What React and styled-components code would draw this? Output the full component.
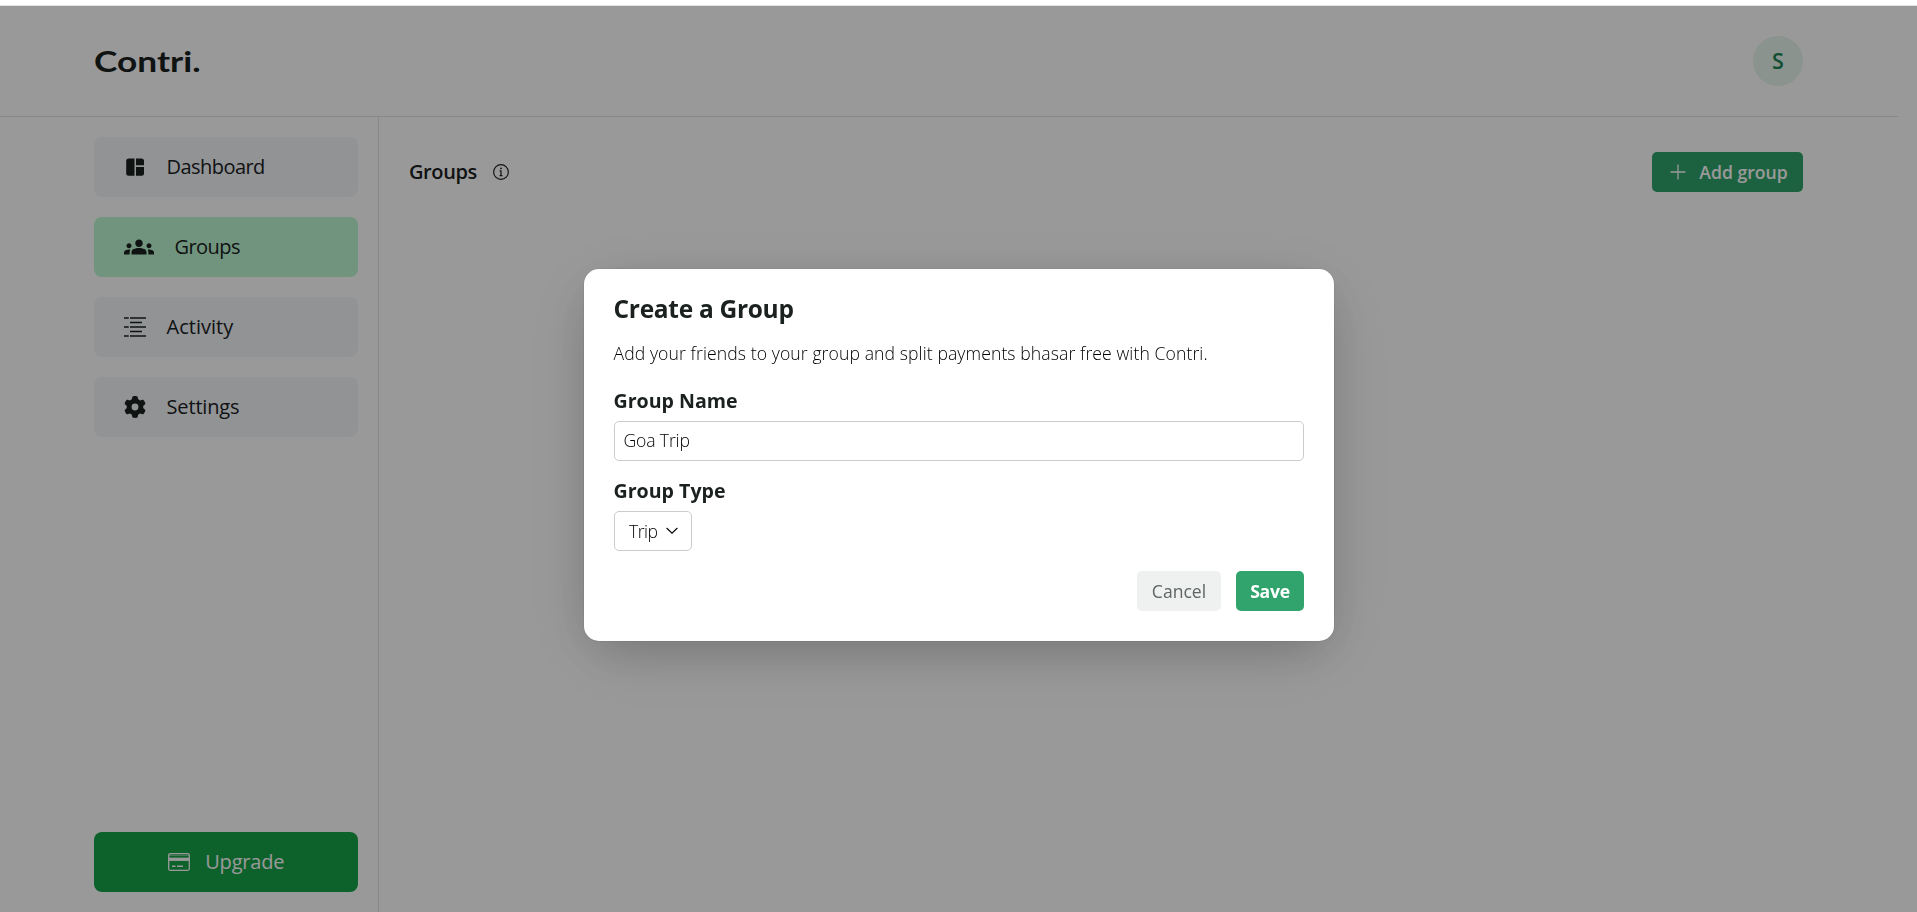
import React from "react";
import styled, { createGlobalStyle } from "styled-components";
import { FaGear } from "react-icons/fa6";
import { MdGroups } from "react-icons/md";

const GlobalStyle = createGlobalStyle`
  * { box-sizing: border-box; }
  body {
    margin: 0;
    background: #fff;
    color: #1a211e;
    font-family: "Open Sans", "Noto Sans", sans-serif;
    font-size: 17.6px;
    overflow: hidden;
  }
  button, input { font: inherit; color: inherit; margin: 0; }
  h1, h2, h3, p { margin: 0; }
  svg { display: block; flex: none; }
`;

const Page = styled.div`
  height: 912px;
  display: flex;
  flex-direction: column;
  border-top: 5px solid #fff;
`;
const Shell = styled.div`
  width: 1898px;
  flex: 1;
  display: flex;
  flex-direction: column;
`;
const Header = styled.header`
  height: 112px;
  padding: 0 95px 0 94px;
  display: flex;
  align-items: center;
  justify-content: space-between;
  border-bottom: 1px solid #e2e3e3;
`;
const Logo = styled.h1`
  font-family: Lato, sans-serif;
  font-size: 28px;
  font-weight: 700;
  line-height: 36px;
  transform: scaleX(1.26);
  transform-origin: left;
`;
const Avatar = styled.div`
  width: 50px;
  height: 50px;
  border-radius: 50%;
  background: #e6f6eb;
  color: #218358;
  display: flex;
  align-items: center;
  justify-content: center;
  font-size: 21.5px;
  font-weight: 600;
`;
const Body = styled.div`
  flex: 1;
  display: flex;
`;
const Sidebar = styled.aside`
  width: 379px;
  padding: 20px 20px 20px 94px;
  border-right: 1px solid #e2e3e3;
  display: flex;
  flex-direction: column;
  justify-content: space-between;
`;
const Nav = styled.nav`
  display: flex;
  flex-direction: column;
  gap: 20px;
`;
const NavItem = styled.a`
  height: 60px;
  padding: 0 30px;
  border-radius: 8px;
  display: flex;
  align-items: center;
  gap: 20px;
  background: ${(p) => (p.$active ? "#bbf7d0" : "#f2f5f8")};
  font-size: 20px;
  font-weight: 400;
`;
const NavLabel = styled.span`
  line-height: 28px;
  padding: 0 0 1px 0.5px;
  letter-spacing: ${(p) => p.$track || 0}px;
`;
const UpgradeButton = styled.button`
  height: 60px;
  border: 0;
  border-radius: 8px;
  background: #16a34a;
  color: #fff;
  display: flex;
  align-items: center;
  justify-content: center;
  gap: 15px;
  font-size: 20px;
  font-weight: 400;
`;
const Main = styled.main`
  flex: 1;
  padding: 35px 95px 0 30px;
`;
const Bar = styled.div`
  height: 40px;
  display: flex;
  align-items: center;
  justify-content: space-between;
`;
const Heading = styled.div`
  display: flex;
  align-items: center;
  gap: 15px;
`;
const HeadingText = styled.h2`
  font-size: 20px;
  font-weight: 600;
  line-height: 28px;
  letter-spacing: -0.4px;
`;
const Button = styled.button`
  height: 40px;
  width: ${(p) => p.$width}px;
  padding: 0 0 1px 1px;
  border: 0;
  border-radius: 5px;
  display: flex;
  align-items: center;
  justify-content: center;
  gap: 11px;
  font-size: 17.6px;
  line-height: 24px;
  font-weight: ${(p) => p.$weight || 600};
  letter-spacing: ${(p) => p.$track || 0}px;
  background: ${(p) => (p.$soft ? "#eef1f0" : "#30a46c")};
  color: ${(p) => (p.$soft ? "#5f6563" : "#fff")};
`;
const Overlay = styled.div`
  position: fixed;
  inset: 5px 0 0 0;
  background: rgba(0, 0, 0, 0.4);
  border-top: 1px solid #dfe5e1;
  display: flex;
  align-items: flex-start;
  justify-content: center;
  padding-top: 263px;
`;
const Dialog = styled.section`
  width: 750px;
  height: 372px;
  padding: 23px 30px 30px;
  border-radius: 15px;
  background: #fff;
  box-shadow: 0 0 0 1px rgba(0, 30, 20, 0.06), 0 15px 75px rgba(0, 0, 0, 0.1),
    0 15px 50px -12px rgba(0, 20, 12, 0.2);
  display: flex;
  flex-direction: column;
`;
const Title = styled.h2`
  font-size: 24.5px;
  font-weight: 700;
  line-height: 34px;
  letter-spacing: -0.3px;
`;
const Description = styled.p`
  margin-top: 14px;
  font-size: 17.6px;
  font-weight: 300;
  line-height: 26px;
  letter-spacing: 0.09px;
  color: #000;
`;
const Field = styled.div`
  display: flex;
  flex-direction: column;
  align-items: flex-start;
  margin-top: ${(p) => p.$top}px;
`;
const Label = styled.label`
  height: 30px;
  padding-top: 1px;
  font-size: 19.6px;
  font-weight: 700;
  line-height: 28px;
  margin-bottom: 5px;
`;
const Input = styled.input`
  width: 100%;
  height: 40px;
  padding: 0 9px 3px;
  border: 1px solid #c9cccb;
  border-radius: 5px;
  outline: 0;
  color: #000;
  font-weight: 300;
  letter-spacing: -0.15px;
`;
const Select = styled.button`
  width: 78px;
  height: 40px;
  padding: 0 13px 1px 14.5px;
  border: 1px solid #c9cccb;
  border-radius: 5px;
  background: #fff;
  display: flex;
  align-items: center;
  justify-content: space-between;
  color: #000;
  font-weight: 300;
  letter-spacing: -0.5px;
`;
const Actions = styled.div`
  display: flex;
  justify-content: flex-end;
  gap: 15px;
  margin-top: 20px;
`;

const DashboardIcon = () => (
  <svg width="22" height="22" viewBox="0 0 22 22" fill="currentColor">
    <path d="M10.5 2.500v17.300H4.700A2.500 2.500 0 0 1 2.200 17.300V5A2.500 2.500 0 0 1 4.700 2.500z" />
    <path d="M12 2.500h5.500A2.500 2.500 0 0 1 20 5V9.300H12z" />
    <path d="M12 11H20V17.300A2.500 2.500 0 0 1 17.500 19.800H12z" />
  </svg>
);

const ActivityIcon = () => (
  <svg width="22" height="22" viewBox="0 0 22 22" fill="none" stroke="currentColor" strokeWidth="1.400">
    <path d="M0 2h4.700M6 2h16M6 6.500h12M0 11h4.700M6 11h16M6 15.500h12M0 20h4.700M6 20h16" />
  </svg>
);

const CardIcon = () => (
  <svg width="22" height="22" viewBox="0 0 22 22" fill="none" stroke="currentColor" strokeWidth="1.300">
    <rect x="0.700" y="2.700" width="20.600" height="16.600" rx="1.500" />
    <path d="M1 4.300h20" strokeWidth="1" opacity=".5" />
    <path d="M1 8.300h20" strokeWidth="3.300" />
    <path d="M4 15.300h3.500M9 15.300h6" strokeWidth="1.500" />
  </svg>
);

const InfoIcon = () => (
  <svg width="18" height="18" viewBox="0 0 15 15" fill="none">
    <circle cx="7.500" cy="7.500" r="6.150" stroke="currentColor" strokeWidth=".950" />
    <circle cx="7.500" cy="4.500" r=".75" fill="currentColor" />
    <path d="M6.300 6h1.200a.5.5 0 0 1 .5.5V10h.700v1H6.300v-1H7V7h-.7z" fill="currentColor" />
  </svg>
);

const PlusIcon = () => (
  <svg width="20" height="20" viewBox="0 0 20 20" stroke="currentColor" strokeWidth="1.300">
    <path d="M10 2.500v15M2.500 10h15" />
  </svg>
);

const ChevronIcon = () => (
  <svg width="12" height="7" viewBox="0 0 12 7" fill="none" stroke="currentColor" strokeWidth="1.100">
    <path d="M.6 1 6 6.200 11.400 1" />
  </svg>
);

const items = [
  { label: "Dashboard", icon: <DashboardIcon />, track: -0.55 },
  { label: "Groups", icon: <MdGroups size={30} />, active: true, track: -0.55 },
  { label: "Activity", icon: <ActivityIcon />, track: 0.02 },
  { label: "Settings", icon: <FaGear size={22} />, track: -0.15 },
];

export default function App() {
  return (
    <Page>
      <GlobalStyle />
      <Shell>
        <Header>
          <Logo>Contri.</Logo>
          <Avatar>S</Avatar>
        </Header>
        <Body>
          <Sidebar>
            <Nav>
              {items.map((item) => (
                <NavItem key={item.label} $active={item.active}>
                  {item.icon}
                  <NavLabel $track={item.track}>{item.label}</NavLabel>
                </NavItem>
              ))}
            </Nav>
            <UpgradeButton>
              <CardIcon />
              <NavLabel $track={-0.2}>Upgrade</NavLabel>
            </UpgradeButton>
          </Sidebar>
          <Main>
            <Bar>
              <Heading>
                <HeadingText>Groups</HeadingText>
                <InfoIcon />
              </Heading>
              <Button $width={151}>
                <PlusIcon />
                Add group
              </Button>
            </Bar>
          </Main>
        </Body>
      </Shell>
      <Overlay>
        <Dialog role="dialog">
          <Title>Create a Group</Title>
          <Description>
            Add your friends to your group and split payments bhasar free with Contri.
          </Description>
          <Field $top={20}>
            <Label>Group Name</Label>
            <Input defaultValue="Goa Trip" />
          </Field>
          <Field $top={15}>
            <Label>Group Type</Label>
            <Select>
              Trip
              <ChevronIcon />
            </Select>
          </Field>
          <Actions>
            <Button $soft $width={84} $weight={500}>Cancel</Button>
            <Button $width={68} $weight={700} $track={-0.3}>Save</Button>
          </Actions>
        </Dialog>
      </Overlay>
    </Page>
  );
}
